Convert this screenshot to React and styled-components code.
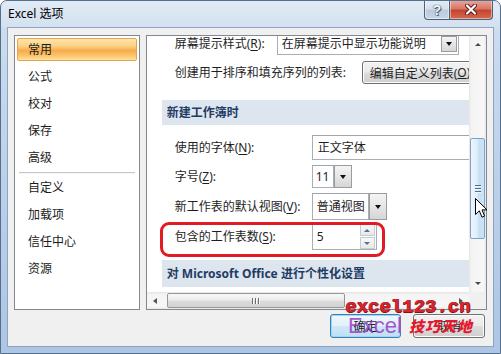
import React from "react";
import styled, { createGlobalStyle } from "styled-components";

const Global = createGlobalStyle`
  html, body { margin: 0; padding: 0; width: 501px; height: 354px; overflow: hidden; background: #fff; }
  body { font-family: "Noto Sans", "Noto Sans CJK SC", sans-serif; font-size: 12px; color: #000; }
  #root { width: 501px; height: 354px; }
  * { box-sizing: border-box; }
`;

const CJK = `"Noto Sans", "Noto Sans CJK SC", sans-serif`;

const Window = styled.div`
  position: relative;
  width: 501px;
  height: 354px;
  display: flex;
  flex-direction: column;
  background: linear-gradient(180deg, #d2e0f0 0%, #c6d8ec 20%, #b9cee8 60%, #aec6e4 100%);
  border: 1px solid #53708f;
  border-radius: 7px 7px 0 0;
  overflow: hidden;
  font-family: ${CJK};
`;

const TitleBar = styled.div`
  height: 26px;
  flex: none;
  display: flex;
  align-items: flex-start;
  padding: 0 7px 0 7px;
  background: linear-gradient(180deg, rgba(255,255,255,0.35), rgba(255,255,255,0.1));
`;

const Title = styled.div`
  line-height: 26px;
  font-size: 12px;
  color: #000;
  flex: 1;
`;

const CaptionButtons = styled.div`
  display: flex;
  margin-top: -1px;
`;

const CaptionButton = styled.div`
  width: ${(p) => p.w}px;
  height: 20px;
  display: flex;
  align-items: center;
  justify-content: center;
  border: 1px solid #4c6076;
  border-top: none;
  border-left: ${(p) => (p.close ? "none" : "1px solid #4c6076")};
  border-radius: ${(p) => (p.close ? "0 0 4px 0" : "0 0 0 4px")};
  background: ${(p) =>
    p.close
      ? "linear-gradient(180deg, #e9a99c 0%, #d8776a 45%, #c5442f 55%, #d56a52 100%)"
      : "linear-gradient(180deg, #e6eef7 0%, #d3dfec 45%, #bccbdc 55%, #c8d7e7 100%)"};
  box-shadow: inset 0 0 0 1px rgba(255,255,255,0.45);
`;

const HelpGlyph = styled.span`
  font-family: "Liberation Sans", sans-serif;
  font-weight: bold;
  font-size: 14px;
  line-height: 1;
  color: #f4f7fb;
  text-shadow: 0 0 1px #3c4a5c, 0 0 1px #3c4a5c, 1px 1px 0 #5a6a7e;
`;

const Client = styled.div`
  flex: 1;
  margin: 0 6px 6px 6px;
  background: #f0f0f0;
  border: 1px solid #8ea3bd;
  display: flex;
  flex-direction: column;
  padding: 7px 6px 0 6px;
`;

const Main = styled.div`
  display: flex;
  gap: 6px;
  height: 275px;
  flex: none;
`;

const NavPanel = styled.div`
  width: 126px;
  border: 1px solid #828790;
  background: #fff;
  padding: 2px;
  display: flex;
  flex-direction: column;
`;

const NavItem = styled.div`
  height: 23px;
  line-height: 21px;
  padding-left: 10px;
  margin-bottom: 4px;
  border: 1px solid ${(p) => (p.active ? "#e5a54f" : "transparent")};
  border-radius: 2px;
  font-size: 12px;
  color: #1b1b1b;
  background: ${(p) =>
    p.active
      ? "linear-gradient(180deg, #fde7b0 0%, #fccf80 35%, #f9aa4c 55%, #fbc66c 80%, #fde1a0 100%)"
      : "transparent"};
`;

const NavSeparator = styled.div`
  height: 1px;
  margin: -1px 2px 3px 2px;
  background: #c8c8c8;
  box-shadow: 0 1px 0 #f4f4f4;
`;

const OptionsPanel = styled.div`
  width: 342px;
  border: 1px solid #828790;
  background: #fff;
  display: grid;
  grid-template-columns: 1fr 17px;
  grid-template-rows: 1fr 17px;
`;

const Content = styled.div`
  position: relative;
  overflow: hidden;
  display: flex;
  flex-direction: column;
  background: #fff;
`;

const Row = styled.div`
  display: flex;
  align-items: center;
  flex: none;
  height: ${(p) => p.h}px;
  margin-top: ${(p) => p.mt}px;
  padding-left: 28px;
`;

const Label = styled.div`
  width: ${(p) => p.w}px;
  flex: none;
  white-space: nowrap;
  line-height: 16px;
  font-size: 12px;
  color: #1e1e1e;
  u { text-decoration: underline; text-underline-offset: 2px; }
`;

const Band = styled.div`
  flex: none;
  height: ${(p) => p.h}px;
  margin-top: ${(p) => p.mt}px;
  margin-left: 15px;
  width: 330px;
  padding-left: 5px;
  background: #dde5ee;
  line-height: ${(p) => p.h}px;
  font-weight: bold;
  font-size: 12px;
  color: #1f3b64;
  white-space: nowrap;
`;

const Field = styled.div`
  flex: none;
  width: ${(p) => p.w}px;
  height: 100%;
  display: flex;
  align-items: center;
  justify-content: space-between;
  border: 1px solid #abadb3;
  border-top-color: #9ea3ad;
  background: #fff;
  padding-left: ${(p) => p.pl ?? 4}px;
  white-space: nowrap;
  overflow: hidden;
  font-size: 12px;
  color: #1e1e1e;
  line-height: 16px;
`;

const DropButton = styled.div`
  flex: none;
  width: ${(p) => p.w}px;
  height: ${(p) => (p.h ? `${p.h}px` : "100%")};
  margin-right: ${(p) => p.mr ?? 0}px;
  display: flex;
  align-items: center;
  justify-content: center;
  border: 1px solid #9c9c9c;
  background: linear-gradient(180deg, #f4f4f4 0%, #e6e6e6 50%, #d6d6d6 100%);
`;

const DownTri = styled.span`
  width: 0;
  height: 0;
  border-left: ${(p) => p.s ?? 3.5}px solid transparent;
  border-right: ${(p) => p.s ?? 3.5}px solid transparent;
  border-top: ${(p) => (p.s ?? 3.5) + 0.5}px solid ${(p) => p.c ?? "#111"};
`;

const UpTri = styled.span`
  width: 0;
  height: 0;
  border-left: ${(p) => p.s ?? 3.5}px solid transparent;
  border-right: ${(p) => p.s ?? 3.5}px solid transparent;
  border-bottom: ${(p) => (p.s ?? 3.5) + 0.5}px solid ${(p) => p.c ?? "#111"};
`;

const LeftTri = styled.span`
  width: 0;
  height: 0;
  border-top: 3.5px solid transparent;
  border-bottom: 3.5px solid transparent;
  border-right: 4px solid ${(p) => p.c ?? "#555"};
`;

const RightTri = styled.span`
  width: 0;
  height: 0;
  border-top: 3.5px solid transparent;
  border-bottom: 3.5px solid transparent;
  border-left: 4px solid ${(p) => p.c ?? "#555"};
`;

const PushButton = styled.div`
  flex: none;
  width: ${(p) => p.w}px;
  height: ${(p) => p.h}px;
  display: flex;
  align-items: center;
  justify-content: ${(p) => (p.left ? "flex-start" : "center")};
  padding-left: ${(p) => (p.left ? "7px" : "0")};
  border: 1px solid ${(p) => (p.def ? "#3c7fb1" : "#707070")};
  border-radius: 3px;
  background: ${(p) =>
    p.def
      ? "linear-gradient(180deg, #eef7fd 0%, #e2f1fb 48%, #cfe8f8 52%, #bcdff5 100%)"
      : "linear-gradient(180deg, #f2f2f2 0%, #ebebeb 48%, #dddddd 52%, #cfcfcf 100%)"};
  box-shadow: ${(p) => (p.def ? "inset 0 0 0 1px #9ad8f5" : "inset 0 0 0 1px #fcfcfc")};
  font-size: 12px;
  color: #1e1e1e;
  white-space: nowrap;
  overflow: hidden;
`;

const SpinCol = styled.div`
  display: flex;
  flex-direction: column;
  gap: 1px;
  margin-right: 1px;
`;

const SpinButton = styled.div`
  width: 15px;
  height: 12px;
  display: flex;
  align-items: center;
  justify-content: center;
  border: 1px solid #c5ccd6;
  background: linear-gradient(180deg, #f8f8f8, #e8e8e8);
`;

const Highlight = styled.div`
  position: absolute;
  left: 13px;
  top: 186px;
  width: 225px;
  height: 35px;
  border: 3px solid #e01b24;
  border-radius: 9px;
  pointer-events: none;
`;

const VScroll = styled.div`
  display: flex;
  flex-direction: column;
  background: linear-gradient(90deg, #e6e6e6 0%, #f4f4f4 15%, #f7f7f7 85%, #e8e8e8 100%);
`;

const HScroll = styled.div`
  display: flex;
  align-items: center;
  background: linear-gradient(180deg, #e6e6e6 0%, #f4f4f4 15%, #f7f7f7 85%, #e8e8e8 100%);
`;

const ScrollArrow = styled.div`
  width: 17px;
  height: 17px;
  flex: none;
  display: flex;
  align-items: center;
  justify-content: center;
`;

const Track = styled.div`
  flex: 1;
  display: flex;
  flex-direction: ${(p) => (p.vertical ? "column" : "row")};
`;

const VThumb = styled.div`
  margin: 85px 1px 0 1px;
  height: 101px;
  border: 1px solid #7fa3c8;
  border-radius: 2px;
  background: linear-gradient(90deg, #eef6fd 0%, #dcecf9 50%, #c7e0f5 51%, #cde3f6 100%);
  display: flex;
  flex-direction: column;
  align-items: center;
  justify-content: center;
  gap: 2px;
`;

const HThumb = styled.div`
  margin: 1px 0 1px 3px;
  width: 178px;
  height: 15px;
  border: 1px solid #979797;
  border-radius: 2px;
  background: linear-gradient(180deg, #f7f7f7 0%, #ececec 48%, #dcdcdc 52%, #d2d2d2 100%);
  display: flex;
  align-items: center;
  justify-content: center;
  gap: 2px;
`;

const GripH = styled.span`
  width: 6px;
  height: 1px;
  background: #4a6f95;
  box-shadow: 0 1px 0 #f2f8fd;
`;

const GripV = styled.span`
  width: 1px;
  height: 6px;
  background: #6b6b6b;
  box-shadow: 1px 0 0 #fafafa;
`;

const Corner = styled.div`
  background: #f0f0f0;
`;

const ButtonRow = styled.div`
  display: flex;
  justify-content: flex-end;
  gap: 12px;
  margin-top: 4px;
  padding-right: 2px;
`;

const Overlay = styled.div`
  position: absolute;
  left: ${(p) => p.x}px;
  top: ${(p) => p.y}px;
  pointer-events: none;
  white-space: nowrap;
`;

const WatermarkSite = styled.span`
  font-family: "Liberation Mono", monospace;
  font-weight: bold;
  font-size: 19px;
  line-height: 1;
  color: #d8262e;
  text-shadow: 1px 0 0 #8a1016, 0 1px 0 #8a1016;
`;

const WatermarkExcel = styled.span`
  font-family: "Liberation Sans", sans-serif;
  font-size: 22px;
  line-height: 1;
  color: #9d3cc6;
  opacity: 0.85;
`;

const WatermarkCn = styled.span`
  font-family: "Noto Sans CJK SC", sans-serif;
  font-weight: 900;
  font-style: italic;
  font-size: 15px;
  line-height: 1;
  letter-spacing: 1px;
  color: #e31a2e;
`;

export default function App() {
  return (
    <>
      <Global />
      <Window>
        <TitleBar>
          <Title>Excel 选项</Title>
          <CaptionButtons>
            <CaptionButton w={26}>
              <HelpGlyph>?</HelpGlyph>
            </CaptionButton>
            <CaptionButton w={43} close>
              <svg width="12" height="11" viewBox="0 0 12 11">
                <path d="M2 1.5 L10 9.5 M10 1.5 L2 9.5" stroke="#5a1a12" strokeWidth="4" strokeLinecap="round" />
                <path d="M2 1.5 L10 9.5 M10 1.5 L2 9.5" stroke="#ffffff" strokeWidth="2.2" strokeLinecap="round" />
              </svg>
            </CaptionButton>
          </CaptionButtons>
        </TitleBar>

        <Client>
          <Main>
            <NavPanel>
              <NavItem active>常用</NavItem>
              <NavItem>公式</NavItem>
              <NavItem>校对</NavItem>
              <NavItem>保存</NavItem>
              <NavItem>高级</NavItem>
              <NavSeparator />
              <NavItem>自定义</NavItem>
              <NavItem>加载项</NavItem>
              <NavItem>信任中心</NavItem>
              <NavItem>资源</NavItem>
            </NavPanel>

            <OptionsPanel>
              <Content>
                <Row h={22} mt={-3}>
                  <Label w={102}>
                    屏幕提示样式(<u>R</u>):
                  </Label>
                  <Field w={182}>
                    在屏幕提示中显示功能说明
                    <DropButton w={16} h={16} mr={1}>
                      <DownTri />
                    </DropButton>
                  </Field>
                </Row>
                <Row h={23} mt={6}>
                  <Label w={187}>创建用于排序和填充序列的列表:</Label>
                  <PushButton w={130} h={23} left>
                    编辑自定义列表(<u>O</u>)...
                  </PushButton>
                </Row>
                <Band h={25} mt={16}>新建工作簿时</Band>
                <Row h={25} mt={10}>
                  <Label w={137}>
                    使用的字体(<u>N</u>):
                  </Label>
                  <Field w={165} pl={5}>正文字体</Field>
                </Row>
                <Row h={23} mt={5}>
                  <Label w={137}>
                    字号(<u>Z</u>):
                  </Label>
                  <Field w={22} pl={3}>11</Field>
                  <DropButton w={18}>
                    <DownTri />
                  </DropButton>
                </Row>
                <Row h={27} mt={5}>
                  <Label w={137}>
                    新工作表的默认视图(<u>V</u>):
                  </Label>
                  <Field w={57}>普通视图</Field>
                  <DropButton w={18}>
                    <DownTri />
                  </DropButton>
                </Row>
                <Row h={27} mt={3}>
                  <Label w={137}>
                    包含的工作表数(<u>S</u>):
                  </Label>
                  <Field w={65}>
                    5
                    <SpinCol>
                      <SpinButton>
                        <UpTri s={3} c="#5b6f8f" />
                      </SpinButton>
                      <SpinButton>
                        <DownTri s={3} c="#5b6f8f" />
                      </SpinButton>
                    </SpinCol>
                  </Field>
                </Row>
                <Band h={27} mt={10}>
                  对 Microsoft Office 进行个性化设置
                </Band>
                <Highlight />
              </Content>

              <VScroll>
                <ScrollArrow>
                  <UpTri s={3} c="#4a4a4a" />
                </ScrollArrow>
                <Track vertical>
                  <VThumb>
                    <GripH />
                    <GripH />
                    <GripH />
                  </VThumb>
                </Track>
                <ScrollArrow>
                  <DownTri s={3} c="#4a4a4a" />
                </ScrollArrow>
              </VScroll>

              <HScroll>
                <ScrollArrow>
                  <LeftTri />
                </ScrollArrow>
                <Track>
                  <HThumb>
                    <GripV />
                    <GripV />
                    <GripV />
                  </HThumb>
                </Track>
                <ScrollArrow>
                  <RightTri />
                </ScrollArrow>
              </HScroll>
              <Corner />
            </OptionsPanel>
          </Main>

          <ButtonRow>
            <PushButton w={71} h={24} def>
              确定
            </PushButton>
            <PushButton w={72} h={24}>
              取消
            </PushButton>
          </ButtonRow>
        </Client>

        <Overlay x={474} y={197}>
          <svg width="13" height="21" viewBox="0 0 13 21">
            <path
              d="M0.5 0.5 L0.5 16.5 L4.3 12.8 L7 19.2 L9.6 18.1 L7 11.9 L12 11.9 Z"
              fill="#ffffff"
              stroke="#000"
              strokeWidth="1"
              strokeLinejoin="miter"
            />
          </svg>
        </Overlay>
        <Overlay x={344} y={297}>
          <WatermarkSite>excel123.cn</WatermarkSite>
        </Overlay>
        <Overlay x={347} y={314}>
          <WatermarkExcel>Excel</WatermarkExcel>
        </Overlay>
        <Overlay x={408} y={317}>
          <WatermarkCn>技巧天地</WatermarkCn>
        </Overlay>
      </Window>
    </>
  );
}
